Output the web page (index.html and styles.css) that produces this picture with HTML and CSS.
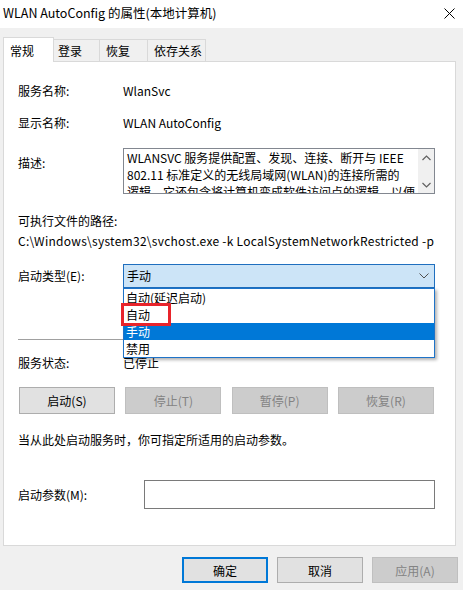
FILE: index.html
```html
<!DOCTYPE html>
<html lang="zh-CN">
<head>
    <meta charset="UTF-8">
    <title>WLAN AutoConfig 的属性(本地计算机)</title>
    <link rel="stylesheet" href="styles.css">
</head>
<body>
    <div class="window">
        <div class="titlebar">
            <span class="title">WLAN AutoConfig 的属性(本地计算机)</span>
            <svg class="close" width="11" height="11" viewBox="0 0 11 11">
                <path d="M0.5 0.5 L10.5 10.5 M10.5 0.5 L0.5 10.5" stroke="#000" stroke-width="1" fill="none"/>
            </svg>
        </div>

        <div class="tabs">
            <div class="tab active">常规</div>
            <div class="tab t2">登录</div>
            <div class="tab t3">恢复</div>
            <div class="tab t4">依存关系</div>
        </div>

        <div class="panel">
            <div class="row r-name">
                <span class="label">服务名称:</span>
                <span>WlanSvc</span>
            </div>
            <div class="row r-display">
                <span class="label">显示名称:</span>
                <span>WLAN AutoConfig</span>
            </div>
            <div class="row r-desc">
                <span class="label desc-label">描述:</span>
                <div class="desc-box">
                    <div class="desc-text">
                        <div>WLANSVC 服务提供配置、发现、连接、断开与 IEEE</div>
                        <div>802.11 标准定义的无线局域网(WLAN)的连接所需的</div>
                        <div>逻辑。它还包含将计算机变成软件访问点的逻辑，以便</div>
                    </div>
                    <div class="scrollbar">
                        <svg width="9" height="6" viewBox="0 0 9 6"><path d="M0.5 5 L4.5 1 L8.5 5" stroke="#606060" stroke-width="1.2" fill="none"/></svg>
                        <svg width="9" height="6" viewBox="0 0 9 6"><path d="M0.5 1 L4.5 5 L8.5 1" stroke="#606060" stroke-width="1.2" fill="none"/></svg>
                    </div>
                </div>
            </div>
            <div class="path-label">可执行文件的路径:</div>
            <div class="path">C:\Windows\system32\svchost.exe -k LocalSystemNetworkRestricted -p</div>

            <div class="row r-type">
                <span class="label">启动类型(E):</span>
                <div class="select">
                    <span>手动</span>
                    <svg width="10" height="6" viewBox="0 0 10 6"><path d="M0.5 0.5 L5 5 L9.5 0.5" stroke="#505050" stroke-width="1" fill="none"/></svg>
                    <ul class="dropdown">
                        <li>自动(延迟启动)</li>
                        <li>自动</li>
                        <li class="selected">手动</li>
                        <li>禁用</li>
                    </ul>
                    <div class="mark"></div>
                </div>
            </div>

            <div class="separator"></div>

            <div class="row r-status">
                <span class="label">服务状态:</span>
                <span>已停止</span>
            </div>

            <div class="actions">
                <button class="btn">启动(S)</button>
                <button class="btn" disabled>停止(T)</button>
                <button class="btn" disabled>暂停(P)</button>
                <button class="btn" disabled>恢复(R)</button>
            </div>

            <div class="hint">当从此处启动服务时，你可指定所适用的启动参数。</div>

            <div class="row r-param">
                <span class="label param-label">启动参数(M):</span>
                <div class="input"></div>
            </div>
        </div>

        <div class="footer">
            <button class="btn dlg default">确定</button>
            <button class="btn dlg">取消</button>
            <button class="btn dlg" disabled>应用(A)</button>
        </div>
    </div>
</body>
</html>
```

FILE: styles.css
```css
body {
    margin: 0;
    background-color: #f0f0f0;
    font-family: "Noto Sans CJK SC", "Noto Sans", sans-serif;
    font-size: 12px;
    line-height: 16px;
    color: #000;
}
.window {
    width: 463px;
    height: 590px;
    overflow: hidden;
}
.titlebar {
    height: 28px;
    background-color: #fff;
    display: flex;
    align-items: center;
    justify-content: space-between;
    padding: 0 8px 0 3px;
    box-sizing: border-box;
}
.title {
    font-size: 12.5px;
    margin-top: -2px;
}
.close {
    margin-top: -2px;
}
.tabs {
    display: flex;
    align-items: flex-end;
    height: 33px;
    padding-left: 3px;
}
.tab {
    height: 22px;
    box-sizing: border-box;
    border: 1px solid #d9d9d9;
    border-bottom: none;
    background-color: #f0f0f0;
    display: flex;
    align-items: center;
    padding-left: 6px;
    margin-left: -1px;
}
.tab.active {
    height: 25px;
    width: 51px;
    margin-left: 0;
    margin-bottom: -1px;
    background-color: #fff;
    position: relative;
    z-index: 1;
    padding-top: 1px;
}
.t2 { width: 47px; padding-left: 4px; }
.t3 { width: 49px; }
.t4 { width: 59px; }
.panel {
    margin-left: 3px;
    width: 453px;
    height: 485px;
    box-sizing: border-box;
    border: 1px solid #d9d9d9;
    background-color: #fff;
    padding: 21px 20px 0 14px;
}
.row {
    display: flex;
    align-items: center;
}
.label {
    width: 105px;
    flex-shrink: 0;
}
.r-display { margin-top: 16px; }
.r-desc {
    margin-top: 17px;
    align-items: flex-start;
}
.desc-label { margin-top: 7px; }
.desc-box {
    width: 312px;
    height: 46px;
    box-sizing: border-box;
    border: 1px solid #828790;
    display: flex;
    overflow: hidden;
}
.desc-text {
    flex: 1;
    padding-left: 3px;
    line-height: 17px;
    white-space: nowrap;
    overflow: hidden;
}
.scrollbar {
    width: 16px;
    background-color: #f0f0f0;
    display: flex;
    flex-direction: column;
    align-items: center;
    justify-content: space-between;
    padding: 6px 0 5px;
    box-sizing: border-box;
}
.path-label { margin-top: 19px; }
.path {
    margin-top: 4px;
    white-space: nowrap;
    letter-spacing: 0.27px;
}
.r-type { margin-top: 15px; }
.select {
    position: relative;
    width: 312px;
    height: 24px;
    box-sizing: border-box;
    border: 1px solid #1f6fbf;
    background-color: #cce4f7;
    display: flex;
    align-items: center;
    justify-content: space-between;
    padding: 0 5px 0 3px;
}
.dropdown {
    position: absolute;
    top: 23px;
    left: -1px;
    width: 312px;
    box-sizing: border-box;
    margin: 0;
    padding: 0;
    list-style: none;
    background-color: #fff;
    border: 1px solid #1e73c8;
    box-shadow: 2px 2px 3px rgba(0, 0, 0, 0.3);
    z-index: 2;
}
.dropdown li {
    height: 17px;
    line-height: 17px;
    padding-left: 2px;
}
.dropdown .selected {
    background-color: #0078d7;
    color: #fff;
}
.mark {
    position: absolute;
    top: 38px;
    left: -3px;
    width: 50px;
    height: 23px;
    box-sizing: border-box;
    border: 3px solid #e8242b;
    z-index: 3;
}
.separator {
    margin-top: 51px;
    height: 1px;
    background-color: #a0a0a0;
}
.r-status { margin-top: 15px; }
.actions {
    margin-top: 16px;
    margin-left: 1px;
    width: 415px;
    display: flex;
    justify-content: space-between;
}
.btn {
    width: 96px;
    height: 27px;
    box-sizing: border-box;
    border: 1px solid #adadad;
    background-color: #e1e1e1;
    font-family: inherit;
    font-size: 12px;
    color: #000;
    padding: 0;
}
.btn:disabled {
    background-color: #cccccc;
    border-color: #bfbfbf;
    color: #838383;
}
.hint { margin-top: 18px; }
.r-param { margin-top: 32px; }
.param-label { width: 126px; }
.input {
    width: 291px;
    height: 29px;
    box-sizing: border-box;
    border: 1px solid #7a7a7a;
}
.footer {
    display: flex;
    justify-content: flex-end;
    gap: 9px;
    padding: 11px 5px 0 0;
}
.btn.dlg {
    width: 86px;
    height: 26px;
}
.btn.default {
    border: 2px solid #0078d7;
}
```
